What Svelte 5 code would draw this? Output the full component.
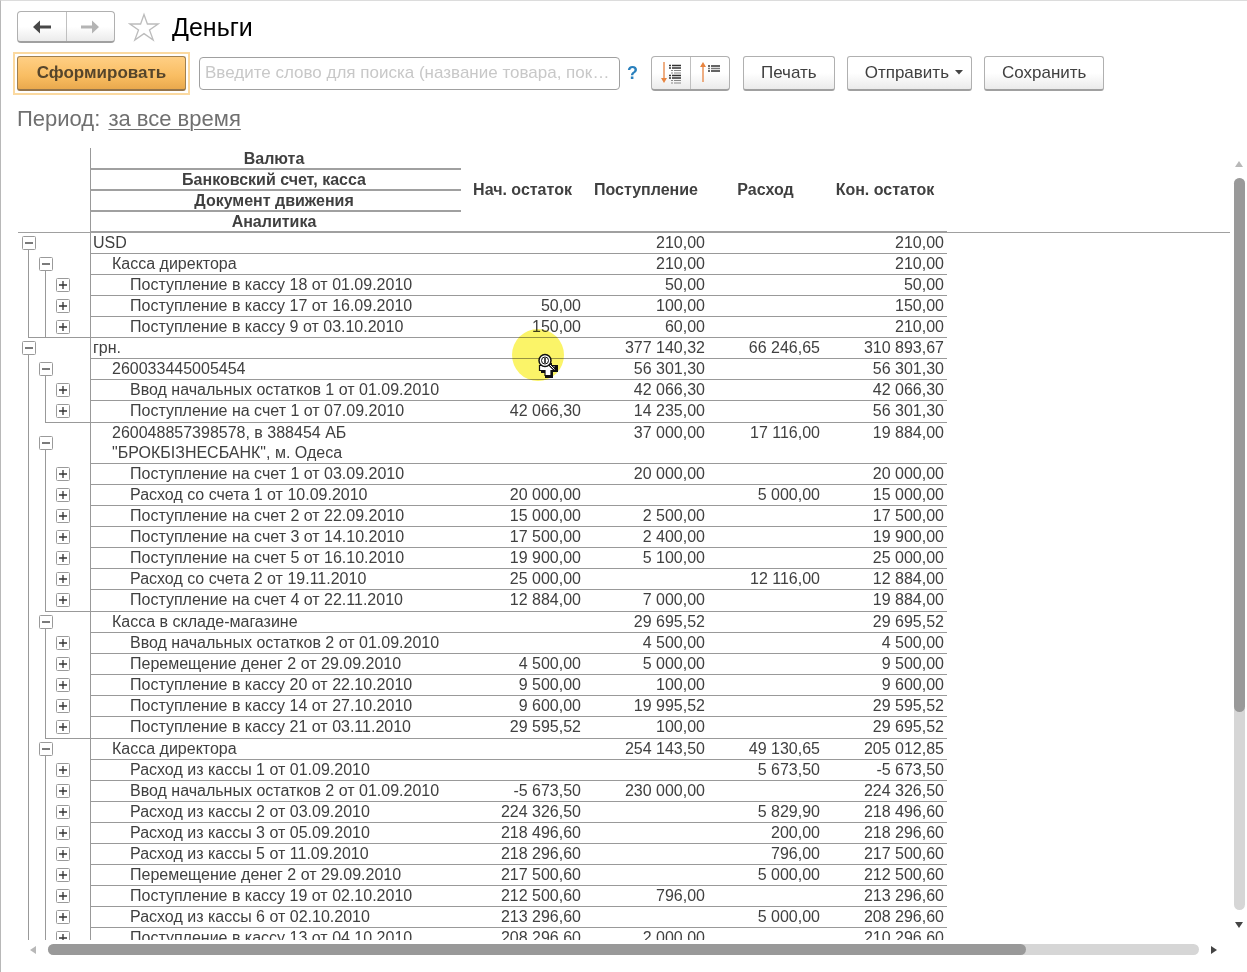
<script lang="ts">
  type Row = {
    level: number;
    name: string;
    values: string[];
    ends?: number[];
  };

  const rows: Row[] = [
    { level: 0, name: 'USD', values: ['', '210,00', '', '210,00'] },
    { level: 1, name: 'Касса директора', values: ['', '210,00', '', '210,00'] },
    { level: 2, name: 'Поступление в кассу 18 от 01.09.2010', values: ['', '50,00', '', '50,00'] },
    { level: 2, name: 'Поступление в кассу 17 от 16.09.2010', values: ['50,00', '100,00', '', '150,00'] },
    { level: 2, name: 'Поступление в кассу 9 от 03.10.2010', values: ['150,00', '60,00', '', '210,00'], ends: [0, 1] },
    { level: 0, name: 'грн.', values: ['', '377 140,32', '66 246,65', '310 893,67'] },
    { level: 1, name: '260033445005454', values: ['', '56 301,30', '', '56 301,30'] },
    { level: 2, name: 'Ввод начальных остатков 1 от 01.09.2010', values: ['', '42 066,30', '', '42 066,30'] },
    { level: 2, name: 'Поступление на счет 1 от 07.09.2010', values: ['42 066,30', '14 235,00', '', '56 301,30'], ends: [1] },
    { level: 1, name: '260048857398578, в 388454 АБ\n"БРОКБІЗНЕСБАНК", м. Одеса', values: ['', '37 000,00', '17 116,00', '19 884,00'] },
    { level: 2, name: 'Поступление на счет 1 от 03.09.2010', values: ['', '20 000,00', '', '20 000,00'] },
    { level: 2, name: 'Расход со счета 1 от 10.09.2010', values: ['20 000,00', '', '5 000,00', '15 000,00'] },
    { level: 2, name: 'Поступление на счет 2 от 22.09.2010', values: ['15 000,00', '2 500,00', '', '17 500,00'] },
    { level: 2, name: 'Поступление на счет 3 от 14.10.2010', values: ['17 500,00', '2 400,00', '', '19 900,00'] },
    { level: 2, name: 'Поступление на счет 5 от 16.10.2010', values: ['19 900,00', '5 100,00', '', '25 000,00'] },
    { level: 2, name: 'Расход со счета 2 от 19.11.2010', values: ['25 000,00', '', '12 116,00', '12 884,00'] },
    { level: 2, name: 'Поступление на счет 4 от 22.11.2010', values: ['12 884,00', '7 000,00', '', '19 884,00'], ends: [1] },
    { level: 1, name: 'Касса в складе-магазине', values: ['', '29 695,52', '', '29 695,52'] },
    { level: 2, name: 'Ввод начальных остатков 2 от 01.09.2010', values: ['', '4 500,00', '', '4 500,00'] },
    { level: 2, name: 'Перемещение денег 2 от 29.09.2010', values: ['4 500,00', '5 000,00', '', '9 500,00'] },
    { level: 2, name: 'Поступление в кассу 20 от 22.10.2010', values: ['9 500,00', '100,00', '', '9 600,00'] },
    { level: 2, name: 'Поступление в кассу 14 от 27.10.2010', values: ['9 600,00', '19 995,52', '', '29 595,52'] },
    { level: 2, name: 'Поступление в кассу 21 от 03.11.2010', values: ['29 595,52', '100,00', '', '29 695,52'], ends: [1] },
    { level: 1, name: 'Касса директора', values: ['', '254 143,50', '49 130,65', '205 012,85'] },
    { level: 2, name: 'Расход из кассы 1 от 01.09.2010', values: ['', '', '5 673,50', '-5 673,50'] },
    { level: 2, name: 'Ввод начальных остатков 2 от 01.09.2010', values: ['-5 673,50', '230 000,00', '', '224 326,50'] },
    { level: 2, name: 'Расход из кассы 2 от 03.09.2010', values: ['224 326,50', '', '5 829,90', '218 496,60'] },
    { level: 2, name: 'Расход из кассы 3 от 05.09.2010', values: ['218 496,60', '', '200,00', '218 296,60'] },
    { level: 2, name: 'Расход из кассы 5 от 11.09.2010', values: ['218 296,60', '', '796,00', '217 500,60'] },
    { level: 2, name: 'Перемещение денег 2 от 29.09.2010', values: ['217 500,60', '', '5 000,00', '212 500,60'] },
    { level: 2, name: 'Поступление в кассу 19 от 02.10.2010', values: ['212 500,60', '796,00', '', '213 296,60'] },
    { level: 2, name: 'Расход из кассы 6 от 02.10.2010', values: ['213 296,60', '', '5 000,00', '208 296,60'] },
    { level: 2, name: 'Поступление в кассу 13 от 04.10.2010', values: ['208 296,60', '2 000,00', '', '210 296,60'] },
  ];

  const levels = [0, 1, 2];
</script>

<svelte:head>
  <title>Деньги</title>
</svelte:head>

<div class="window">
  <header>
    <div class="group nav">
      <button aria-label="Назад">
        <svg width="20" height="14" viewBox="0 0 20 14"><path d="M1 7 L8 0.500 V5.500 H19 V8.500 H8 V13.500 Z" fill="#484848" /></svg>
      </button>
      <button aria-label="Вперед">
        <svg width="20" height="14" viewBox="0 0 20 14"><path d="M19 7 L12 0.500 V5.500 H1 V8.500 H12 V13.500 Z" fill="#b4b4b4" /></svg>
      </button>
    </div>
    <button class="star" aria-label="В избранное">
      <svg width="32" height="30" viewBox="0 0 32 30"><path d="M16 2.500 L19.400 12 H30 L21.500 17.900 L25.200 28 L16 21.600 L6.800 28 L10.500 17.900 L2 12 H12.600 Z" fill="#fff" stroke="#bcbcbc" stroke-width="1.300" /></svg>
    </button>
    <h1>Деньги</h1>
  </header>

  <div class="toolbar">
    <div class="focus"><button class="primary">Сформировать</button></div>
    <input type="text" aria-label="Поиск" placeholder="Введите слово для поиска (название товара, покупателя)" />
    <a class="help" href="#help">?</a>
    <div class="group tools">
      <button aria-label="Развернуть все">
        <svg width="24" height="22" viewBox="0 0 24 22">
          <path d="M5 0 V17" stroke="#e8935a" stroke-width="1.500" />
          <path d="M2 16 H8 L5 21 Z" fill="#e8843f" />
          <path d="M10 3.500 H12 M13 3.500 H22 M10 6 H12 M13 6 H22 M10 13.500 H12 M13 13.500 H22 M10 16 H12 M13 16 H22" stroke="#333" stroke-width="1.300" />
          <path d="M12 8.500 H14 M15 8.500 H22 M12 11 H14 M15 11 H22 M12 18.500 H14 M15 18.500 H22 M12 21 H14 M15 21 H22" stroke="#888" stroke-width="1.200" />
        </svg>
      </button>
      <button aria-label="Свернуть все">
        <svg width="24" height="22" viewBox="0 0 24 22">
          <path d="M5 4 V20" stroke="#e8935a" stroke-width="1.500" />
          <path d="M2 5 H8 L5 0 Z" fill="#e8843f" />
          <path d="M10 4 H12 M13 4 H22 M10 9 H12 M13 9 H22" stroke="#333" stroke-width="1.500" />
          <path d="M10 6.500 H12 M13 6.500 H22" stroke="#777" stroke-width="1.300" />
        </svg>
      </button>
    </div>
    <button class="command">Печать</button>
    <button class="command menu">Отправить
      <svg width="8" height="5" viewBox="0 0 8 5"><path d="M0 0 H8 L4 4.500 Z" fill="#444" /></svg>
    </button>
    <button class="command">Сохранить</button>
  </div>

  <p class="period">Период: <a href="#period">за все время</a></p>

  <div class="sheet">
    <div class="report">
      <table>
        <colgroup>
          <col class="col-outline" />
          <col class="col-name" />
          <col class="col-opening" />
          <col class="col-number" />
          <col class="col-expense" />
          <col class="col-number" />
          <col />
        </colgroup>
        <thead>
          <tr>
            <td class="blank" rowspan="4"></td>
            <th class="title" scope="col">Валюта</th>
            <th rowspan="4" scope="col">Нач. остаток</th>
            <th rowspan="4" scope="col">Поступление</th>
            <th rowspan="4" scope="col">Расход</th>
            <th rowspan="4" scope="col">Кон. остаток</th>
            <td class="blank" rowspan="4"></td>
          </tr>
          <tr><th class="title" scope="col">Банковский счет, касса</th></tr>
          <tr><th class="title" scope="col">Документ движения</th></tr>
          <tr><th class="title" scope="col">Аналитика</th></tr>
        </thead>
        <tbody>
          {#each rows as row}
            <tr class:closing={row.ends?.length === 1}>
              <td class="outline">
                <div class="slots">
                  {#each levels as level}
                    <span
                      class="slot"
                      class:start={level === row.level && level < 2}
                      class:line={level < row.level}
                      class:end={row.ends?.[0] === level}
                    >
                      {#if level === row.level}
                        <button class="toggle" aria-label={level < 2 ? 'Свернуть' : 'Развернуть'}>
                          <svg width="14" height="14" viewBox="0 0 14 14">
                            <rect x="0.500" y="0.500" width="13" height="13" rx="1" fill="#fff" stroke="#9a9a9a" />
                            <path d={level < 2 ? 'M3 7 H11' : 'M3 7 H11 M7 3 V11'} stroke="#333" stroke-width="1.300" />
                          </svg>
                        </button>
                      {/if}
                    </span>
                  {/each}
                </div>
              </td>
              <td class="name level-{row.level}">{row.name}</td>
              {#each row.values as value}
                <td class="number">{value}</td>
              {/each}
              <td></td>
            </tr>
          {/each}
        </tbody>
      </table>

      <div class="pointer">
        <svg width="54" height="54" viewBox="0 0 54 54">
          <circle cx="26" cy="27" r="26" fill="#fbf468" />
        </svg>
      </div>
      <svg class="cursor" width="22" height="26" viewBox="0 0 22 26">
        <path d="M9 10 H15 V12 H21 V19 H16 V25 H8 V20 H4 V13 H9 Z" fill="#111" />
        <path d="M7.500 10 H12.500 V12.500 H18 V17.500 H14 V22.500 H8 V17.500 H2.500 V12.500 H7.500 Z" fill="#fff" stroke="#111" stroke-width="1.200" />
        <path d="M12 11 L18 17" stroke="#111" stroke-width="3" />
        <path d="M12 11 L17.500 16.500" stroke="#fff" stroke-width="1" />
        <circle cx="8" cy="7.500" r="6" fill="#fff" stroke="#111" stroke-width="1.500" />
        <circle cx="8" cy="7.500" r="3.500" fill="none" stroke="#111" />
        <path d="M8 5 V10" stroke="#111" stroke-width="1.500" />
      </svg>
    </div>

    <div class="scroll vertical">
      <button aria-label="Вверх"><svg width="8" height="6" viewBox="0 0 8 6"><path d="M4 0 L8 6 H0 Z" fill="#b8b8b8" /></svg></button>
      <div class="track"><div class="thumb"></div></div>
      <button aria-label="Вниз"><svg width="8" height="6" viewBox="0 0 8 6"><path d="M0 0 H8 L4 6 Z" fill="#444" /></svg></button>
    </div>
    <div class="scroll horizontal">
      <button aria-label="Влево"><svg width="6" height="8" viewBox="0 0 6 8"><path d="M6 0 V8 L0 4 Z" fill="#b8b8b8" /></svg></button>
      <div class="track"><div class="thumb"></div></div>
      <button aria-label="Вправо"><svg width="6" height="8" viewBox="0 0 6 8"><path d="M0 0 V8 L6 4 Z" fill="#444" /></svg></button>
    </div>
  </div>
</div>

<style>
  :global(body) {
    background: #fff;
  }

  .window {
    box-sizing: border-box;
    height: 100vh;
    display: flex;
    flex-direction: column;
    border-left: 1px solid #b8b8b8;
    border-top: 1px solid #dcdcdc;
    font-family: "Liberation Sans", Arial, sans-serif;
    font-size: 16px;
    color: #404040;
  }

  button {
    padding: 0;
    border: none;
    background: none;
    font: inherit;
    color: inherit;
  }

  svg {
    display: block;
  }

  header {
    display: flex;
    align-items: center;
    height: 32px;
    margin: 10px 0 0 16px;
  }

  .group {
    box-sizing: border-box;
    display: flex;
    border: 1px solid #b0b0b0;
    border-bottom: 2px solid #a0a0a0;
    border-radius: 4px;
    background: linear-gradient(#fff 50%, #ebebeb);
  }

  .group button {
    flex: 1;
    display: flex;
    align-items: center;
    justify-content: center;
  }

  .group button + button {
    border-left: 1px solid #c0c0c0;
  }

  .nav {
    width: 98px;
    height: 32px;
  }

  .star {
    margin-left: 13px;
  }

  h1 {
    margin: 0 0 0 12px;
    font-size: 25px;
    font-weight: normal;
    color: #000;
  }

  .toolbar {
    display: flex;
    align-items: center;
    height: 44px;
    margin: 8px 16px 0 12px;
  }

  .focus {
    padding: 2px;
    border: 2px solid #fbd9a0;
  }

  .primary {
    box-sizing: border-box;
    width: 169px;
    height: 35px;
    border: 1px solid #a08050;
    border-bottom: 2px solid #94744a;
    border-radius: 3px;
    background: linear-gradient(#ffcf84, #f9bd62 60%, #e9a94d);
    font-size: 17px;
    font-weight: bold;
    color: #56452b;
  }

  input {
    box-sizing: border-box;
    width: 421px;
    height: 33px;
    margin-left: 9px;
    padding: 0 5px;
    border: 1px solid #a0a0a0;
    border-radius: 4px;
    font: inherit;
    font-size: 17px;
    text-overflow: ellipsis;
  }

  input::placeholder {
    color: #c8c8c8;
  }

  .help {
    margin: 0 13px 0 7px;
    font-size: 18px;
    font-weight: bold;
    color: #2a80bd;
    text-decoration: none;
  }

  .tools {
    width: 79px;
    height: 35px;
    margin-right: 13px;
  }

  .command {
    box-sizing: border-box;
    height: 35px;
    margin-right: 12px;
    padding: 0 17px;
    border: 1px solid #b0b0b0;
    border-bottom: 2px solid #a0a0a0;
    border-radius: 3px;
    background: linear-gradient(#fff 50%, #ebebeb);
    font-size: 17px;
  }

  .menu {
    display: flex;
    align-items: center;
    gap: 6px;
    padding-right: 8px;
  }

  .period {
    margin: 11px 0 0 16px;
    font-size: 22px;
    line-height: 26px;
    color: #707070;
  }

  .period a {
    margin-left: 2px;
    color: inherit;
    text-underline-offset: 3px;
    text-decoration-thickness: 1px;
  }

  .sheet {
    flex: 1;
    min-height: 0;
    display: grid;
    grid-template-columns: 1fr 17px;
    grid-template-rows: 1fr 32px;
    margin: 16px 0 0 17px;
  }

  .report {
    position: relative;
    overflow: hidden;
  }

  table {
    width: 100%;
    table-layout: fixed;
    border-collapse: separate;
    border-spacing: 0;
  }

  .col-outline {
    width: 72px;
  }

  .col-name {
    width: 371px;
  }

  .col-opening {
    width: 123px;
  }

  .col-number {
    width: 124px;
  }

  .col-expense {
    width: 115px;
  }

  td,
  th {
    box-sizing: border-box;
    height: 21px;
    padding: 0;
    line-height: 20px;
    vertical-align: top;
  }

  th {
    border-bottom: 2px solid #a0a0a0;
    line-height: 19px;
    vertical-align: middle;
  }

  .title {
    padding-right: 4px;
    border-left: 1px solid #999;
  }

  thead .blank {
    border-bottom: 1px solid #a0a0a0;
  }

  tr:first-child .title {
    height: 22px;
  }

  .name,
  .number {
    border-bottom: 1px solid #999;
  }

  .name {
    padding-left: 2px;
    border-left: 1px solid #999;
    white-space: pre-line;
  }

  .level-1 {
    padding-left: 21px;
  }

  .level-2 {
    padding-left: 39px;
  }

  .number {
    padding-right: 3px;
    text-align: right;
    white-space: nowrap;
  }

  .closing td {
    height: 22px;
  }

  .closing .outline,
  .outline {
    height: 1px;
  }

  .slots {
    display: flex;
    height: 100%;
    padding-left: 2px;
  }

  .slot {
    position: relative;
    width: 17px;
    display: flex;
    align-items: center;
    justify-content: center;
    padding-bottom: 2px;
  }

  .slot::before {
    position: absolute;
    left: 8px;
    top: 0;
    bottom: 0;
  }

  .line::before,
  .start::before {
    content: "";
    border-left: 1px solid #999;
  }

  .start::before {
    top: 50%;
  }

  .end::after {
    content: "";
    position: absolute;
    left: 8px;
    bottom: 0;
    width: 62px;
    border-bottom: 1px solid #999;
  }

  .slot + .end::after {
    width: 45px;
  }

  .toggle {
    position: relative;
  }

  .pointer {
    position: absolute;
    left: 494px;
    top: 180px;
    mix-blend-mode: multiply;
  }

  .cursor {
    position: absolute;
    left: 519px;
    top: 205px;
  }

  .scroll {
    display: flex;
    align-items: center;
  }

  .scroll button {
    display: flex;
    align-items: center;
    justify-content: center;
  }

  .track {
    flex: 1;
    border-radius: 6px;
    background: #d6d6d6;
  }

  .thumb {
    border-radius: 6px;
    background: #999;
  }

  .vertical {
    flex-direction: column;
    padding: 1px 0 1px 1px;
  }

  .vertical button {
    width: 16px;
    height: 29px;
  }

  .vertical .track {
    width: 11px;
  }

  .vertical .thumb {
    height: 73%;
  }

  .horizontal {
    align-items: flex-start;
    padding: 4px 1px 0 0;
  }

  .horizontal button {
    width: 30px;
    height: 11px;
  }

  .horizontal .thumb {
    width: 85%;
    height: 11px;
  }
</style>
